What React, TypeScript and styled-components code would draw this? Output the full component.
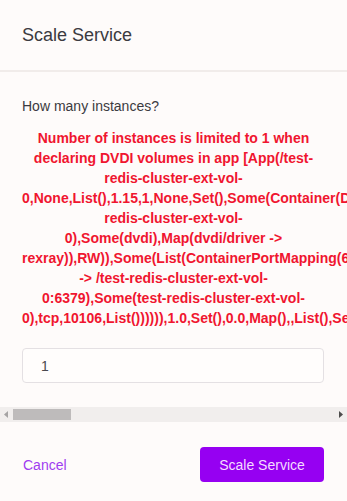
import React from "react";
import styled, { createGlobalStyle } from "styled-components";

const Global = createGlobalStyle`
  html, body {
    margin: 0;
    padding: 0;
    background: #fefbfa;
  }
  body {
    font-family: "Liberation Sans", Arial, sans-serif;
    color: #3b3a40;
  }
`;

const Modal = styled.div`
  width: 347px;
  height: 501px;
  display: flex;
  flex-direction: column;
  background: #fefbfa;
  overflow: hidden;
`;

const Header = styled.header`
  flex: none;
  padding: 24px 22px;
  border-bottom: 2px solid #f1ecea;
`;

const Title = styled.h1`
  margin: 0;
  font-size: 18px;
  line-height: 22px;
  font-weight: 400;
  color: #3b3a40;
`;

const Body = styled.div`
  flex: none;
  padding: 24px 22px;
  overflow: hidden;
`;

const ScrollBar = styled.div`
  flex: none;
  height: 15px;
  display: flex;
  align-items: stretch;
  background: #f1eeed;
`;

const ScrollButton = styled.div`
  width: 13px;
  display: flex;
  align-items: center;
  justify-content: center;
`;

const ScrollTrack = styled.div`
  flex: 1;
  display: flex;
  align-items: center;
`;

const ScrollThumb = styled.div<{ $width: number }>`
  width: ${(p) => p.$width}px;
  height: 11px;
  background: #bebbbb;
`;

const Question = styled.div`
  font-size: 14px;
  line-height: 20px;
  color: #3b3a40;
`;

const ErrorText = styled.div`
  margin-top: 12px;
  font-size: 14px;
  line-height: 20px;
  font-weight: 700;
  color: #f0152f;
  text-align: center;
`;

const NumberInput = styled.input`
  display: block;
  box-sizing: border-box;
  margin-top: 20px;
  width: 302px;
  height: 35px;
  padding: 0 18px;
  border: 1px solid #e4e0e3;
  border-radius: 4px;
  background: #fffdfc;
  font-family: "Liberation Sans", Arial, sans-serif;
  font-size: 14px;
  color: #4a494f;
  outline: none;
`;

const Footer = styled.footer`
  flex: none;
  display: flex;
  justify-content: space-between;
  align-items: center;
  padding: 25px 23px 19px 23px;
`;

const CancelButton = styled.button`
  border: none;
  background: none;
  padding: 0;
  font-family: "Liberation Sans", Arial, sans-serif;
  font-size: 14px;
  color: #a03cf0;
  cursor: pointer;
`;

const PrimaryButton = styled.button`
  width: 124px;
  height: 35px;
  border: none;
  border-radius: 4px;
  background: #9600f2;
  color: #f4dcff;
  font-family: "Liberation Sans", Arial, sans-serif;
  font-size: 14px;
  cursor: pointer;
`;

const message =
  "Number of instances is limited to 1 when declaring DVDI volumes in app [App(/test-redis-cluster-ext-vol-0,None,List(),1.15,1,None,Set(),Some(Container(DOCKER,List(ExternalVolume(data,ExternalVolumeInfo(None,test-redis-cluster-ext-vol-0),Some(dvdi),Map(dvdi/driver -> rexray)),RW)),Some(List(ContainerPortMapping(6379,0,0,tcp,None,Map(VIP_0 -> /test-redis-cluster-ext-vol-0:6379),Some(test-redis-cluster-ext-vol-0),tcp,10106,List()))))),1.0,Set(),0.0,Map(),,List(),Set(),List(),List(),List(),None,List(),BackoffStrategy(1000000000nanoseconds,3600000000000nanoseconds,1.15),UpgradeStrategy(0.0,0.0),Labels(Map()),Some(1494581508276),None,Residency(10,WAIT_FOREVER),Secrets(Map()),ReadinessChecks(List()))]";

export default function App() {
  return (
    <Modal>
      <Global />
      <Header>
        <Title>Scale Service</Title>
      </Header>
      <Body>
        <Question>How many instances?</Question>
        <ErrorText>{message}</ErrorText>
        <NumberInput type="text" defaultValue="1" />
      </Body>
      <ScrollBar>
        <ScrollButton>
          <svg width="5" height="7" viewBox="0 0 5 7">
            <path d="M0 3.5 L4 0 L4 7 Z" fill="#a6a4a4" />
          </svg>
        </ScrollButton>
        <ScrollTrack>
          <ScrollThumb $width={58} />
        </ScrollTrack>
        <ScrollButton>
          <svg width="5" height="7" viewBox="0 0 5 7">
            <path d="M5 3.5 L1 0 L1 7 Z" fill="#4d4c4c" />
          </svg>
        </ScrollButton>
      </ScrollBar>
      <Footer>
        <CancelButton>Cancel</CancelButton>
        <PrimaryButton>Scale Service</PrimaryButton>
      </Footer>
    </Modal>
  );
}
